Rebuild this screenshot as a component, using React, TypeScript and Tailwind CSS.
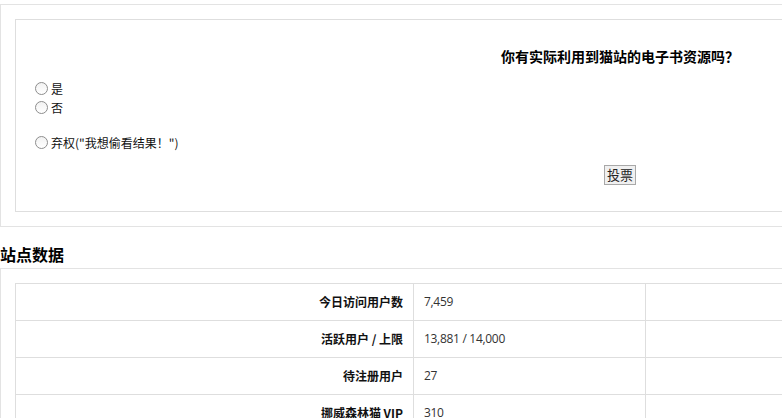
import React from "react";

const cjk = '"Noto Sans CJK SC", "Noto Sans", sans-serif';
const latin = '"Open Sans", "Noto Sans CJK SC", sans-serif';

function Radio({ label }: { label: string }) {
  return (
    <label className="flex h-[19px] items-center text-[12px] leading-[19px] text-[#111]">
      <span className="mr-[3px] inline-block h-[13px] w-[13px] rounded-full border border-[#8d8d8d] bg-gradient-to-b from-[#f2f2f2] to-white" />
      <span>{label}</span>
    </label>
  );
}

const stats: [string, string][] = [
  ["今日访问用户数", "7,459"],
  ["活跃用户 / 上限", "13,881 / 14,000"],
  ["待注册用户", "27"],
  ["挪威森林猫 VIP", "310"],
];

export default function App() {
  return (
    <div className="w-full overflow-hidden bg-white" style={{ fontFamily: cjk }}>
      <div className="w-[1240px] pt-[4px]">
        {/* poll */}
        <div className="border border-[#e3e3e3] p-[14px]">
          <div className="border border-[#dedede] pt-[26px] pb-[26px]">
            <div className="h-[20px] text-center text-[14px] font-bold leading-[20px] text-black">
              你有实际利用到猫站的电子书资源吗？
            </div>
            <div className="mt-[13px] pl-[19px]">
              <Radio label="是" />
              <Radio label="否" />
              <div className="mt-[16px]">
                <Radio label={'弃权("我想偷看结果！")'} />
              </div>
            </div>
            <div className="mt-[13px] flex justify-center">
              <button className="h-[20px] border border-[#a8a8a8] bg-[#f0f0f0] px-[2px] text-[13px] leading-[18px] text-[#222]">
                投票
              </button>
            </div>
          </div>
        </div>

        {/* site statistics */}
        <div className="mt-[17px] mb-[4px] h-[20px] text-[16px] font-bold leading-[20px] text-black">
          站点数据
        </div>
        <div className="border border-[#e3e3e3] p-[14px]">
          <table className="w-full border-collapse border border-[#dedede]">
            <tbody>
              {stats.map(([k, v]) => (
                <tr key={k} className="h-[37px]">
                  <td className="w-[398px] border border-[#dedede] pr-[10px] text-right text-[12px] font-bold text-[#111]">
                    {k}
                  </td>
                  <td
                    className="w-[232px] border border-[#dedede] pl-[10px] text-[12px] tracking-[-0.3px] text-[#333]"
                    style={{ fontFamily: latin }}
                  >
                    {v}
                  </td>
                  <td className="border border-[#dedede]" />
                </tr>
              ))}
            </tbody>
          </table>
        </div>
      </div>
    </div>
  );
}
